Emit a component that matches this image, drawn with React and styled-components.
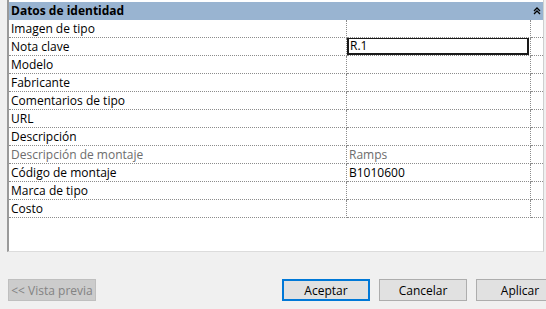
import React from "react";
import styled, { createGlobalStyle } from "styled-components";

const GlobalStyle = createGlobalStyle`
  html, body {
    margin: 0;
    padding: 0;
    background: #f0f0f0;
    overflow: hidden;
  }
  body {
    font-family: "Segoe UI", "Open Sans", "Noto Sans", sans-serif;
    font-size: 12px;
    color: #000;
  }
`;

const Page = styled.div`
  width: 546px;
  height: 309px;
  display: flex;
  flex-direction: column;
`;

const Panel = styled.div`
  margin-left: 7px;
  width: 537px;
  height: 252px;
  background: #fff;
  border-left: 2px solid #9a9a9a;
  border-right: 1px solid #cfcfcf;
  border-bottom: 1px solid #dcdcdc;
  padding-top: 2px;
  box-sizing: border-box;
`;

const Header = styled.div`
  height: 18px;
  background: #99b4d1;
  display: flex;
  align-items: center;
  justify-content: space-between;
  padding: 0 2px 0 2px;
  font-weight: bold;
  line-height: 18px;
`;

const Grid = styled.div`
  display: grid;
  grid-template-columns: 338px 184px 1fr;
`;

const Cell = styled.div`
  height: 18px;
  box-sizing: border-box;
  border-bottom: 1px dotted #8c8c8c;
  border-right: ${({ $last }) => ($last ? "none" : "1px dotted #8c8c8c")};
  padding-left: 2px;
  line-height: 17px;
  white-space: nowrap;
  overflow: hidden;
  color: ${({ $muted }) => ($muted ? "#6d6d6d" : "#000")};
  position: relative;
`;

const EditBox = styled.div`
  position: absolute;
  left: 0;
  top: -1px;
  width: 182px;
  height: 18px;
  box-sizing: border-box;
  border: 2px solid #1a1a1a;
  background: #fff;
  padding-left: 1px;
  line-height: 14px;
`;

const Footer = styled.div`
  display: flex;
  padding: 27px 0 0 8px;
`;

const ButtonGroup = styled.div`
  display: flex;
  gap: 9px;
  margin-left: 186px;
`;

const Button = styled.button`
  flex: none;
  width: 88px;
  height: 22px;
  box-sizing: border-box;
  font-family: inherit;
  font-size: 12px;
  padding: 0;
  background: ${({ disabled }) => (disabled ? "#cccccc" : "#e1e1e1")};
  color: ${({ disabled }) => (disabled ? "#838383" : "#000")};
  border: ${({ $primary, disabled }) =>
    $primary ? "2px solid #0078d7" : disabled ? "1px solid #bfbfbf" : "1px solid #adadad"};
`;

const rows = [
  { label: "Imagen de tipo", value: "" },
  { label: "Nota clave", value: "R.1", edit: true },
  { label: "Modelo", value: "" },
  { label: "Fabricante", value: "" },
  { label: "Comentarios de tipo", value: "" },
  { label: "URL", value: "" },
  { label: "Descripción", value: "" },
  { label: "Descripción de montaje", value: "Ramps", muted: true },
  { label: "Código de montaje", value: "B1010600" },
  { label: "Marca de tipo", value: "" },
  { label: "Costo", value: "" },
];

function CollapseIcon() {
  return (
    <svg width="8" height="8" viewBox="0 0 8 8">
      <path d="M1 4 L4 1 L7 4 M1 7 L4 4 L7 7" fill="none" stroke="#000" strokeWidth="1.3" />
    </svg>
  );
}

export default function App() {
  return (
    <Page>
      <GlobalStyle />
      <Panel>
        <Header>
          <span>Datos de identidad</span>
          <CollapseIcon />
        </Header>
        <Grid>
          {rows.map((r) => (
            <React.Fragment key={r.label}>
              <Cell $muted={r.muted}>{r.label}</Cell>
              <Cell $muted={r.muted}>
                {r.edit ? <EditBox>{r.value}</EditBox> : r.value}
              </Cell>
              <Cell $last />
            </React.Fragment>
          ))}
        </Grid>
      </Panel>
      <Footer>
        <Button disabled>&lt;&lt; Vista previa</Button>
        <ButtonGroup>
          <Button $primary>Aceptar</Button>
          <Button>Cancelar</Button>
          <Button>Aplicar</Button>
        </ButtonGroup>
      </Footer>
    </Page>
  );
}
